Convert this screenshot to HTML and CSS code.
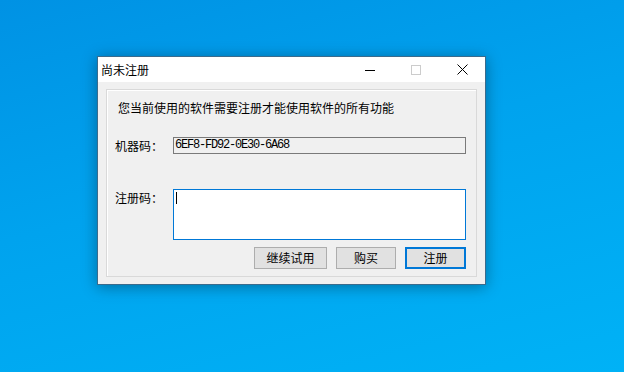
FILE: index.html
```html
<!DOCTYPE html>
<html lang="zh-CN">
<head>
  <meta charset="UTF-8" />
  <title>尚未注册</title>
  <link rel="stylesheet" href="styles.css">
</head>
<body>
  <div class="desktop">
    <div class="window">
      <div class="titlebar">
        <span class="title">尚未注册</span>
        <div class="caption">
          <span class="cap-btn">
            <svg width="10" height="10" viewBox="0 0 10 10"><path d="M0 5.5H10" stroke="#000" stroke-width="1"/></svg>
          </span>
          <span class="cap-btn">
            <svg width="10" height="10" viewBox="0 0 10 10"><rect x="0.5" y="0.5" width="9" height="9" fill="none" stroke="#cccccc" stroke-width="1"/></svg>
          </span>
          <span class="cap-btn">
            <svg width="11" height="11" viewBox="0 0 11 11"><path d="M0.5 0.5L10.5 10.5M10.5 0.5L0.5 10.5" stroke="#000" stroke-width="1"/></svg>
          </span>
        </div>
      </div>
      <div class="client">
        <div class="group">
          <p class="desc">您当前使用的软件需要注册才能使用软件的所有功能</p>
          <div class="row machine">
            <span class="label">机器码：</span>
            <div class="field readonly">6EF8-FD92-0E30-6A68</div>
          </div>
          <div class="row reg">
            <span class="label">注册码：</span>
            <div class="field textarea"><span class="caret"></span></div>
          </div>
          <div class="buttons">
            <button class="btn btn-trial">继续试用</button>
            <button class="btn btn-buy">购买</button>
            <button class="btn btn-reg">注册</button>
          </div>
        </div>
      </div>
    </div>
  </div>
</body>
</html>
```

FILE: styles.css
```css
html, body {
  margin: 0;
  padding: 0;
}
body {
  font-family: "Noto Sans CJK SC", "Noto Sans", sans-serif;
  font-size: 12px;
  color: #000;
}
.desktop {
  position: relative;
  width: 624px;
  height: 372px;
  overflow: hidden;
  background: linear-gradient(165deg, #0092e4 0%, #00a3ee 45%, #00b2f6 100%);
}

/* window sits on the desktop */
.window {
  position: absolute;
  left: 97px;
  top: 56px;
  width: 389px;
  height: 229px;
  box-sizing: border-box;
  border: 1px solid #3b6b8c;
  box-shadow: 0 2px 14px rgba(0, 0, 0, 0.35);
  display: flex;
  flex-direction: column;
}
.titlebar {
  height: 25px;
  background: #fff;
  display: flex;
  align-items: center;
}
.title {
  padding-left: 3px;
  line-height: 25px;
  flex: 1;
}
.caption {
  display: flex;
  height: 25px;
}
.cap-btn {
  width: 46px;
  height: 25px;
  display: flex;
  align-items: center;
  justify-content: center;
}
.cap-btn svg {
  display: block;
}

.client {
  flex: 1;
  background: #f0f0f0;
  padding: 7px 8px;
}
.group {
  height: 188px;
  box-sizing: border-box;
  border: 1px solid #d9d9d9;
  box-shadow: inset 1px 1px 0 #fff;
  padding: 0 10px 0 8px;
}
.desc {
  margin: 10px 0 0 3px;
  line-height: 16px;
}
.row {
  display: flex;
}
.label {
  width: 58px;
  flex: none;
}
.field {
  flex: 1;
  box-sizing: border-box;
}
.machine {
  margin-top: 21px;
  align-items: center;
}
.machine .label {
  line-height: 17px;
}
.readonly {
  height: 17px;
  border: 1px solid #7a7a7a;
  background: #f0f0f0;
  font-family: "Liberation Mono", monospace;
  font-size: 12px;
  letter-spacing: -1.2px;
  line-height: 15px;
  padding-left: 1px;
}
.reg {
  margin-top: 35px;
  align-items: flex-start;
}
.reg .label {
  margin-top: 1px;
  line-height: 16px;
}
.textarea {
  height: 51px;
  border: 1px solid #0078d7;
  background: #fff;
  padding: 2px 0 0 2px;
}
.caret {
  display: block;
  width: 1px;
  height: 12px;
  background: #000;
}
.buttons {
  margin-top: 7px;
  display: flex;
  justify-content: flex-end;
  gap: 9px;
}
.btn {
  height: 22px;
  box-sizing: border-box;
  border: 1px solid #adadad;
  background: #e1e1e1;
  font-family: inherit;
  font-size: 12px;
  color: #000;
  padding: 0;
  line-height: 18px;
}
.btn-trial { width: 73px; }
.btn-buy { width: 60px; }
.btn-reg {
  width: 61px;
  border: 2px solid #0078d7;
}
```
